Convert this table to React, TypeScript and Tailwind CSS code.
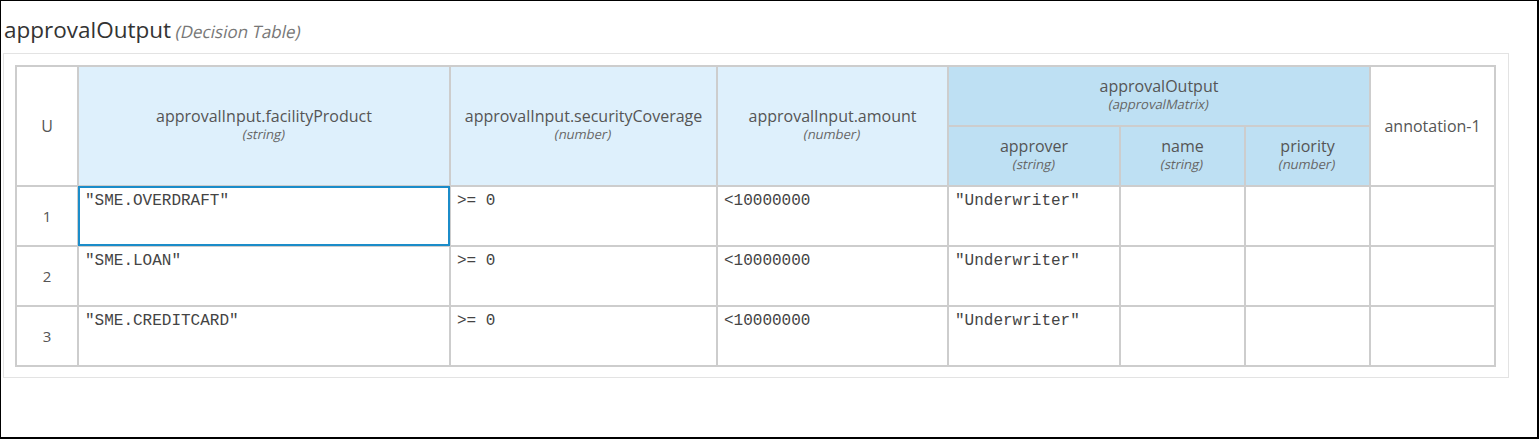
const inputs = [
  { name: "approvalInput.facilityProduct", type: "string" },
  { name: "approvalInput.securityCoverage", type: "number" },
  { name: "approvalInput.amount", type: "number" },
];

const outputs = [
  { name: "approver", type: "string" },
  { name: "name", type: "string" },
  { name: "priority", type: "number" },
];

const rules = [
  { product: '"SME.OVERDRAFT"', coverage: ">= 0", amount: "<10000000", approver: '"Underwriter"' },
  { product: '"SME.LOAN"', coverage: ">= 0", amount: "<10000000", approver: '"Underwriter"' },
  { product: '"SME.CREDITCARD"', coverage: ">= 0", amount: "<10000000", approver: '"Underwriter"' },
];

const sans = "font-['Open_Sans',sans-serif]";
const mono = "font-['Liberation_Mono',monospace]";
const cell = "border-2 border-[#cdcdcd]";

// the source renders its type hints as a slanted regular face, not a true italic
function Slanted({ children, className }: { children: React.ReactNode; className: string }) {
  return <span className={`inline-block -skew-x-12 ${className}`}>{children}</span>;
}

function HeaderLabel({ name, type }: { name: string; type: string }) {
  return (
    <div className="flex flex-col items-center pb-[3px]">
      <span className="text-[16px] leading-[20px] text-[#555]">{name}</span>
      <Slanted className="text-[13px] leading-[17px] text-[#666]">({type})</Slanted>
    </div>
  );
}

function Entry({ text }: { text: string }) {
  return <div className={`px-[6px] pt-[4px] text-[16px] leading-[20px] text-[#444] ${mono}`}>{text}</div>;
}

export default function App() {
  return (
    <div className={`w-[1539px] h-[439px] border-l border-t border-r-2 border-b-2 border-black bg-white ${sans}`}>
      <div className="pl-[2px] pt-[14px]">
        <h1 className="flex items-baseline gap-[5px] pl-px leading-[30px]">
          <span className="text-[22.5px] text-[#333]">approvalOutput</span>
          <Slanted className="text-[17px] text-[#777]">(Decision Table)</Slanted>
        </h1>
        <div className="mt-[6px] w-[1506px] border border-[#e3e3e3] px-[11px] pt-[11px] pb-[10px]">
          <table className="border-collapse table-fixed w-[1481px]">
            <colgroup>
              <col className="w-[62px]" />
              <col className="w-[372px]" />
              <col className="w-[267px]" />
              <col className="w-[231px]" />
              <col className="w-[172px]" />
              <col className="w-[125px]" />
              <col className="w-[125px]" />
              <col className="w-[125px]" />
            </colgroup>
            <thead>
              <tr className="h-[60px]">
                <th rowSpan={2} className={`${cell} bg-white text-[16px] font-normal text-[#555]`}>U</th>
                {inputs.map((c) => (
                  <th key={c.name} rowSpan={2} className={`${cell} bg-[#def0fc] font-normal`}>
                    <HeaderLabel name={c.name} type={c.type} />
                  </th>
                ))}
                <th colSpan={3} className={`${cell} bg-[#bee0f3] font-normal`}>
                  <HeaderLabel name="approvalOutput" type="approvalMatrix" />
                </th>
                <th rowSpan={2} className={`${cell} bg-white text-[16px] font-normal text-[#555]`}>annotation-1</th>
              </tr>
              <tr className="h-[60px]">
                {outputs.map((c) => (
                  <th key={c.name} className={`${cell} bg-[#bee0f3] font-normal`}>
                    <HeaderLabel name={c.name} type={c.type} />
                  </th>
                ))}
              </tr>
            </thead>
            <tbody>
              {rules.map((r, i) => (
                <tr key={i} className="h-[60px]">
                  <td className={`${cell} text-center align-middle text-[15px] text-[#555]`}>{i + 1}</td>
                  <td className={`${cell} p-0 align-top ${i === 0 ? "relative" : ""}`}>
                    {i === 0 && <div className="absolute -inset-px border-2 border-[#1b8cc9]" />}
                    <Entry text={r.product} />
                  </td>
                  <td className={`${cell} p-0 align-top`}>
                    <Entry text={r.coverage} />
                  </td>
                  <td className={`${cell} p-0 align-top`}>
                    <Entry text={r.amount} />
                  </td>
                  <td className={`${cell} p-0 align-top`}>
                    <Entry text={r.approver} />
                  </td>
                  <td className={cell} />
                  <td className={cell} />
                  <td className={cell} />
                </tr>
              ))}
            </tbody>
          </table>
        </div>
      </div>
    </div>
  );
}
